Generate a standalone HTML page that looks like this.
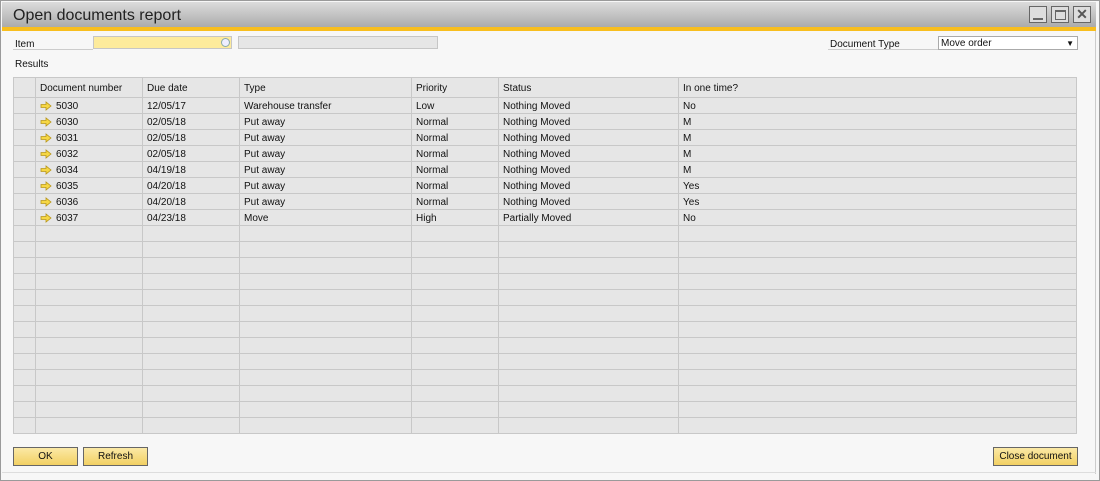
<!DOCTYPE html><html><head><style>
*{margin:0;padding:0;box-sizing:border-box}
body{width:1100px;height:481px;background:#fff;font-family:"Liberation Sans",sans-serif;font-size:10px;color:#111;position:relative;overflow:hidden}
.a{position:absolute}
#win{left:0;top:0;width:1100px;height:481px;border:1px solid #9a9a9a;background:#f7f7f7}
#tb{left:2px;top:2px;width:1094px;height:26px;background:linear-gradient(#dcdcdc,#a9a9a9)}
#tb span{position:absolute;left:11px;top:5px;font-size:16px;color:#222}
#yb{left:2px;top:27px;width:1094px;height:4px;background:#f8be1e}
.wb{top:6px;width:18px;height:17px;border:1px solid #666;background:#ddd}
table{position:absolute;left:13px;top:77px;border-collapse:collapse;table-layout:fixed;width:1063px;background:#e6e6e6}
td{border:1px solid #c8c8c8;height:16px;padding:1px 4px 0;white-space:nowrap;overflow:hidden;font-size:10px}
tr.h td{height:20px;padding-left:4px}
.btn{top:447px;height:19px;border:1px solid #666;background:linear-gradient(#fbe9a6,#f2d063);text-align:center;line-height:18px;font-size:10px}
.arr{display:inline-block;vertical-align:-2px;margin-right:4px}
</style></head><body>
<div id="win" class="a"></div>
<div id="tb" class="a"><span>Open documents report</span></div>
<div class="a wb" style="left:1029px"><div class="a" style="left:3px;top:11px;width:10px;height:2px;background:#666"></div></div>
<div class="a wb" style="left:1051px"><div class="a" style="left:3px;top:3px;width:11px;height:10px;border:1px solid #666;border-top-width:2px"></div></div>
<div class="a wb" style="left:1073px;font-size:14px;line-height:14px;text-align:center;color:#555;font-weight:bold">✕</div>
<div id="yb" class="a"></div>
<div class="a" style="left:1095px;top:31px;width:1px;height:443px;background:#ccc"></div>
<div class="a" style="left:2px;top:472px;width:1094px;height:1px;background:#ddd"></div>
<div class="a" style="left:15px;top:39px">Item</div>
<div class="a" style="left:13px;top:49px;width:80px;height:1px;background:#ccc"></div>
<div class="a" style="left:93px;top:36px;width:139px;height:13px;background:#fdeb9c;border:1px solid #c6c6c6"><div class="a" style="right:1px;top:1px;width:9px;height:9px;border-radius:50%;border:1px solid #8aa;background:#eef"></div></div>
<div class="a" style="left:238px;top:36px;width:200px;height:13px;background:#e6e6e6;border:1px solid #c6c6c6"></div>
<div class="a" style="left:830px;top:39px">Document Type</div>
<div class="a" style="left:828px;top:49px;width:110px;height:1px;background:#ccc"></div>
<div class="a" style="left:938px;top:36px;width:140px;height:14px;background:#fff;border:1px solid #aaa;padding-left:2px;line-height:13px">Move order<span class="a" style="right:3px;top:0;font-size:8px">▼</span></div>
<div class="a" style="left:15px;top:59px">Results</div>
<table>
<colgroup><col style="width:22px"><col style="width:107px"><col style="width:97px"><col style="width:172px"><col style="width:87px"><col style="width:180px"><col style="width:398px"></colgroup>
<tr class="h"><td></td><td>Document number</td><td>Due date</td><td>Type</td><td>Priority</td><td>Status</td><td>In one time?</td></tr>
<tr><td></td><td><svg class="arr" width="12" height="10"><path d="M1 3.5h5V1l5 4-5 4V6.5H1z" fill="#f6d743" stroke="#b8961a" stroke-width=".8"/></svg>5030</td><td>12/05/17</td><td>Warehouse transfer</td><td>Low</td><td>Nothing Moved</td><td>No</td></tr>
<tr><td></td><td><svg class="arr" width="12" height="10"><path d="M1 3.5h5V1l5 4-5 4V6.5H1z" fill="#f6d743" stroke="#b8961a" stroke-width=".8"/></svg>6030</td><td>02/05/18</td><td>Put away</td><td>Normal</td><td>Nothing Moved</td><td>M</td></tr>
<tr><td></td><td><svg class="arr" width="12" height="10"><path d="M1 3.5h5V1l5 4-5 4V6.5H1z" fill="#f6d743" stroke="#b8961a" stroke-width=".8"/></svg>6031</td><td>02/05/18</td><td>Put away</td><td>Normal</td><td>Nothing Moved</td><td>M</td></tr>
<tr><td></td><td><svg class="arr" width="12" height="10"><path d="M1 3.5h5V1l5 4-5 4V6.5H1z" fill="#f6d743" stroke="#b8961a" stroke-width=".8"/></svg>6032</td><td>02/05/18</td><td>Put away</td><td>Normal</td><td>Nothing Moved</td><td>M</td></tr>
<tr><td></td><td><svg class="arr" width="12" height="10"><path d="M1 3.5h5V1l5 4-5 4V6.5H1z" fill="#f6d743" stroke="#b8961a" stroke-width=".8"/></svg>6034</td><td>04/19/18</td><td>Put away</td><td>Normal</td><td>Nothing Moved</td><td>M</td></tr>
<tr><td></td><td><svg class="arr" width="12" height="10"><path d="M1 3.5h5V1l5 4-5 4V6.5H1z" fill="#f6d743" stroke="#b8961a" stroke-width=".8"/></svg>6035</td><td>04/20/18</td><td>Put away</td><td>Normal</td><td>Nothing Moved</td><td>Yes</td></tr>
<tr><td></td><td><svg class="arr" width="12" height="10"><path d="M1 3.5h5V1l5 4-5 4V6.5H1z" fill="#f6d743" stroke="#b8961a" stroke-width=".8"/></svg>6036</td><td>04/20/18</td><td>Put away</td><td>Normal</td><td>Nothing Moved</td><td>Yes</td></tr>
<tr><td></td><td><svg class="arr" width="12" height="10"><path d="M1 3.5h5V1l5 4-5 4V6.5H1z" fill="#f6d743" stroke="#b8961a" stroke-width=".8"/></svg>6037</td><td>04/23/18</td><td>Move</td><td>High</td><td>Partially Moved</td><td>No</td></tr>
<tr><td></td><td></td><td></td><td></td><td></td><td></td><td></td></tr>
<tr><td></td><td></td><td></td><td></td><td></td><td></td><td></td></tr>
<tr><td></td><td></td><td></td><td></td><td></td><td></td><td></td></tr>
<tr><td></td><td></td><td></td><td></td><td></td><td></td><td></td></tr>
<tr><td></td><td></td><td></td><td></td><td></td><td></td><td></td></tr>
<tr><td></td><td></td><td></td><td></td><td></td><td></td><td></td></tr>
<tr><td></td><td></td><td></td><td></td><td></td><td></td><td></td></tr>
<tr><td></td><td></td><td></td><td></td><td></td><td></td><td></td></tr>
<tr><td></td><td></td><td></td><td></td><td></td><td></td><td></td></tr>
<tr><td></td><td></td><td></td><td></td><td></td><td></td><td></td></tr>
<tr><td></td><td></td><td></td><td></td><td></td><td></td><td></td></tr>
<tr><td></td><td></td><td></td><td></td><td></td><td></td><td></td></tr>
<tr><td></td><td></td><td></td><td></td><td></td><td></td><td></td></tr>
</table>
<div class="a btn" style="left:13px;width:65px">OK</div>
<div class="a btn" style="left:83px;width:65px">Refresh</div>
<div class="a btn" style="left:993px;width:85px">Close document</div>
</body></html>
